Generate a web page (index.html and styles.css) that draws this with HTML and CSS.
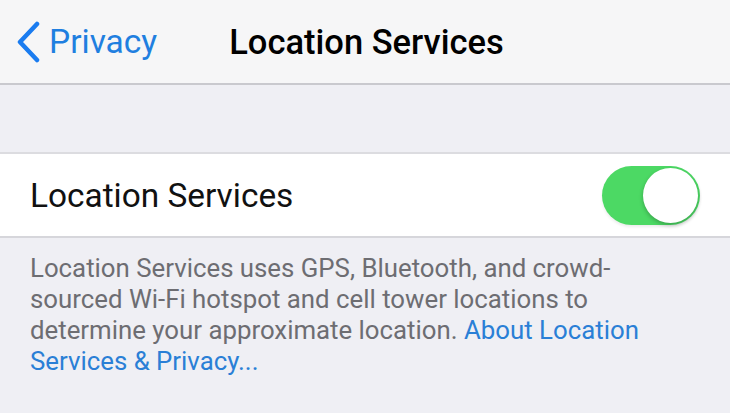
FILE: index.html
```html
<!DOCTYPE html>
<html lang="en">
<head>
    <meta charset="UTF-8">
    <meta name="viewport" content="width=device-width, initial-scale=1.0">
    <title>Location Services</title>
    <link rel="stylesheet" href="styles.css">
</head>
<body>

    <div class="nav-bar">
        <a class="nav-back" href="#">
            <svg class="chevron" width="26" height="42" viewBox="0 0 26 42">
                <path d="M22 3 L5 21 L22 39" fill="none" stroke="#1a7cf0" stroke-width="4.5" stroke-linecap="round" stroke-linejoin="round"/>
            </svg>
            <span>Privacy</span>
        </a>
        <h1 class="nav-title">Location Services</h1>
    </div>

    <div class="group-gap"></div>

    <div class="cell">
        <span class="cell-label">Location Services</span>
        <div class="switch on">
            <div class="knob"></div>
        </div>
    </div>

    <p class="footer-note">
        Location Services uses GPS, Bluetooth, and crowd-<br>
        sourced Wi-Fi hotspot and cell tower locations to<br>
        determine your approximate location. <a href="#">About Location<br>
        Services &amp; Privacy...</a>
    </p>

</body>
</html>
```

FILE: styles.css
```css
body {
    margin: 0;
    font-family: Roboto, "Liberation Sans", sans-serif;
    background-color: #efeff4;
    width: 730px;
    height: 413px;
    overflow: hidden;
}
.nav-bar {
    height: 83px;
    background-color: #f6f6f7;
    border-bottom: 2px solid #c9c9ce;
    display: flex;
    align-items: center;
}
.nav-back {
    display: flex;
    align-items: center;
    margin-left: 15px;
    color: #1f7fe0;
    text-decoration: none;
    font-size: 33.5px;
}
.chevron {
    margin-right: 8px;
}
.nav-title {
    margin: 0 0 0 72px;
    font-size: 34.5px;
    font-weight: 500;
    color: #000;
}
.group-gap {
    height: 67px;
}
.cell {
    height: 82px;
    background-color: #fff;
    border-top: 2px solid #dcdce0;
    border-bottom: 2px solid #d6d6db;
    display: flex;
    align-items: center;
    justify-content: space-between;
    padding: 0 30px 0 30px;
}
.cell-label {
    font-size: 33.4px;
    color: #111;
}
.switch {
    width: 98px;
    height: 59px;
    border-radius: 30px;
    background-color: #4cd964;
    display: flex;
    align-items: center;
    justify-content: flex-end;
    padding: 0 2px;
    box-sizing: border-box;
    box-shadow: 0 2px 3px rgba(0, 0, 0, 0.08);
}
.knob {
    width: 55px;
    height: 55px;
    border-radius: 50%;
    background-color: #fff;
    box-shadow: 0 2px 4px rgba(0, 0, 0, 0.25);
}
.footer-note {
    margin: 15px 30px 0 30px;
    font-size: 25.8px;
    line-height: 31px;
    color: #6d6d72;
}
.footer-note a {
    color: #2a7fd6;
    text-decoration: none;
}
```
